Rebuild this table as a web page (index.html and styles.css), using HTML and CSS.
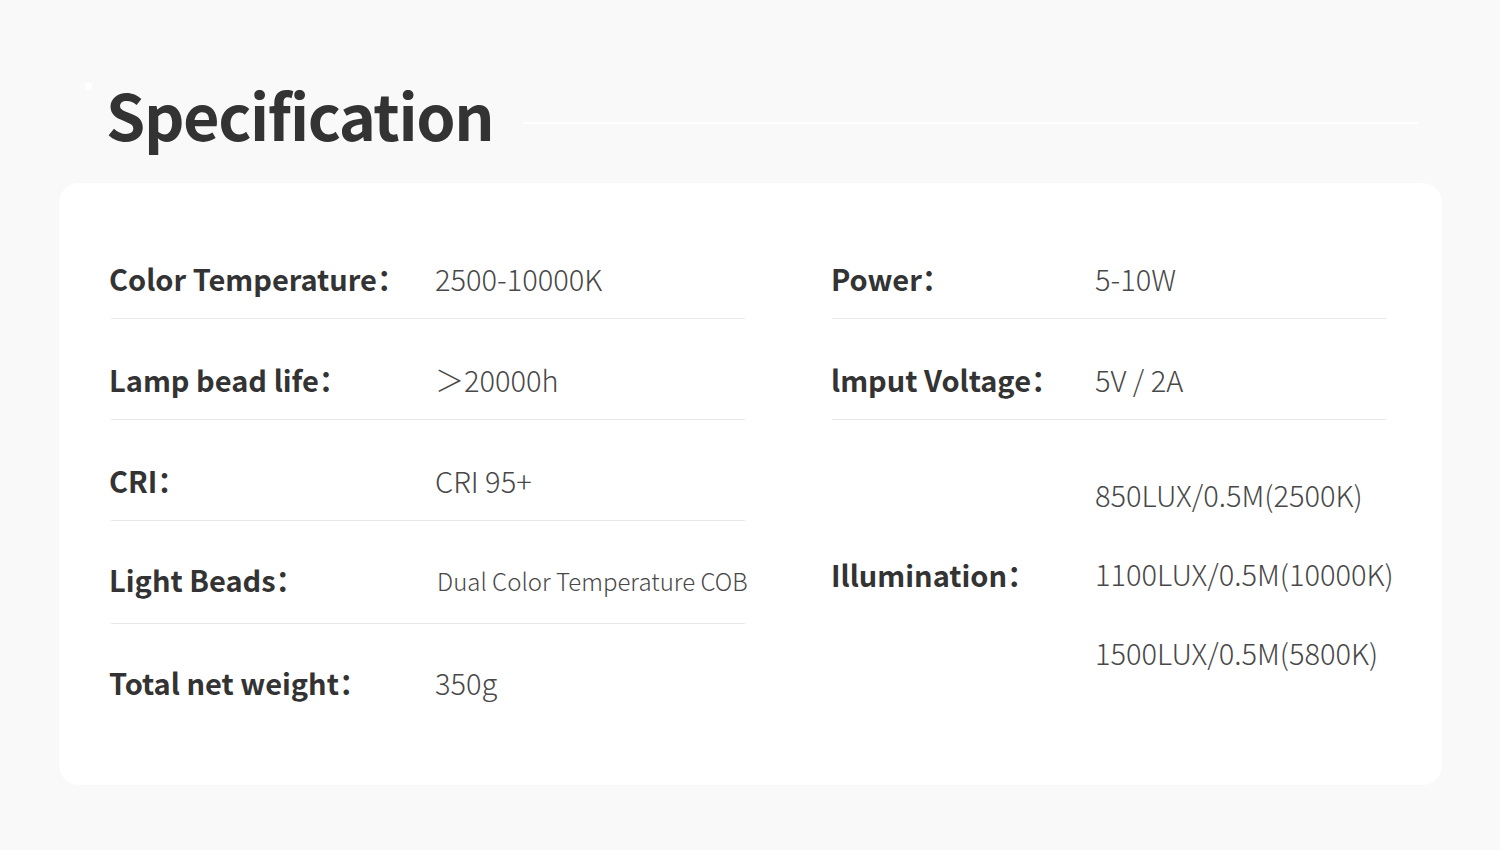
FILE: index.html
```html
<!DOCTYPE html>
<html lang="en">
<head>
<meta charset="utf-8">
<title>Specification</title>
<link rel="stylesheet" href="styles.css">
</head>
<body>
<header class="head">
  <span class="dot"></span>
  <h1 class="title">Specification</h1>
  <span class="rule"></span>
</header>
<section class="card">
  <div class="col col-left">
    <div class="row"><span class="label">Color Temperature：</span><span class="value">2500-10000K</span></div>
    <div class="row"><span class="label">Lamp bead life：</span><span class="value">＞20000h</span></div>
    <div class="row"><span class="label">CRI：</span><span class="value">CRI 95+</span></div>
    <div class="row row-raised"><span class="label">Light Beads：</span><span class="value value-small">Dual Color Temperature COB</span></div>
    <div class="row row-last"><span class="label">Total net weight：</span><span class="value">350g</span></div>
  </div>
  <div class="col col-right">
    <div class="row"><span class="label">Power：</span><span class="value">5-10W</span></div>
    <div class="row"><span class="label">lmput Voltage：</span><span class="value">5V / 2A</span></div>
    <div class="row row-multi">
      <span class="label">Illumination：</span>
      <span class="value-list">
        <span class="value">850LUX/0.5M(2500K)</span>
        <span class="value">1100LUX/0.5M(10000K)</span>
        <span class="value">1500LUX/0.5M(5800K)</span>
      </span>
    </div>
  </div>
</section>
</body>
</html>
```
FILE: styles.css
```css
* { box-sizing: border-box; }
html, body { margin: 0; padding: 0; }
body {
  width: 1500px;
  height: 850px;
  background: #f9f9f9;
  font-family: "Noto Sans CJK SC", "Noto Sans", sans-serif;
  color: #333;
  overflow: hidden;
}
.head {
  display: flex;
  align-items: flex-start;
  padding: 82px 82px 0 85px;
}
.dot {
  width: 7px;
  height: 7px;
  margin-top: 1px;
  background: #fff;
  flex: none;
}
.title {
  margin: 0 0 0 14px;
  font-size: 63px;
  line-height: 64px;
  letter-spacing: -1.4px;
  font-weight: 700;
  color: #333;
  flex: none;
}
.rule {
  flex: 1;
  height: 2px;
  background: #fff;
  margin: 40px 0 0 30px;
}
.card {
  margin: 37px 0 0 59px;
  width: 1383px;
  height: 602px;
  background: #fff;
  border-radius: 20px;
  padding: 35px 55px 0 52px;
  display: grid;
  grid-template-columns: 634px 554px;
  column-gap: 87px;
  align-items: start;
}
.row {
  display: flex;
  align-items: center;
  padding: 40px 0 20px;
  border-bottom: 1px solid #e8e8e8;
  line-height: 40px;
}
.row-raised { padding: 36px 0 22px; }
.row-last, .row-multi { border-bottom: none; }
.row-last { padding-top: 38px; }
.label {
  font-weight: 700;
  font-size: 29px;
  color: #333;
  flex: none;
}
.col-left .label { width: 326px; margin-left: -2px; }
.col-right .label { width: 264px; margin-left: -1px; }
.value {
  font-weight: 300;
  font-size: 29px;
  color: #484848;
}
.value-small { font-size: 24px; white-space: nowrap; padding-left: 2px; margin-top: 4px; }
.row-multi {
  padding-top: 35px;
}
.value-list {
  display: flex;
  flex-direction: column;
  line-height: 79px;
}
```
